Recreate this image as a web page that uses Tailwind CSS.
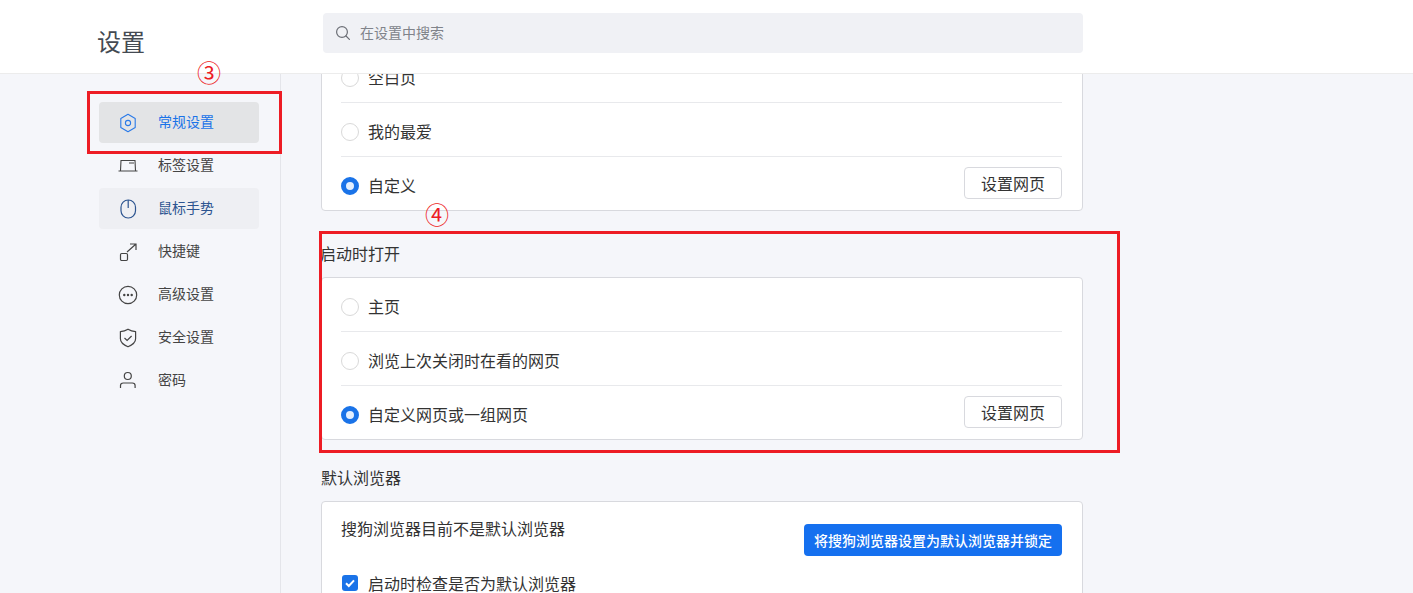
<!DOCTYPE html>
<html lang="zh-CN">
<head>
    <meta charset="UTF-8">
    <title>设置</title>
    <script src="https://cdn.jsdelivr.net/npm/@tailwindcss/browser@4"></script>
</head>
<body>
    <div class="relative flex flex-col h-screen overflow-hidden bg-[#f5f6fa] font-['Noto_Sans_CJK_SC','Microsoft_YaHei',sans-serif] text-[#333]">

        <!-- header -->
        <header class="flex items-center shrink-0 h-[74px] bg-white border-b border-[#ececec]">
            <div class="w-[323px] pl-[97px] pt-[8px] text-2xl leading-8 text-[#444a52]">设置</div>
            <div class="flex items-center w-[760px] h-10 mb-[7px] pl-[12px] gap-[9px] rounded bg-[#f0f1f5] text-sm text-[#80838a]">
                <svg class="w-4 h-4" viewBox="0 0 16 16" fill="none" stroke="#6b6e75" stroke-width="1.2">
                    <circle cx="7" cy="7" r="5.4"/><path d="M11 11l3.4 3.4" stroke-linecap="round"/>
                </svg>
                <span class="-mt-[2px]">在设置中搜索</span>
            </div>
        </header>

        <div class="flex flex-1 min-h-0">
            <!-- sidebar -->
            <nav class="shrink-0 w-[281px] pl-[99px] pr-[21px] pt-[28px] border-r border-[#e4e5ea]">
                <div class="flex flex-col gap-[2px] text-sm text-[#444]">
                    <a class="flex items-center h-[41px] pl-[17px] gap-[18px] rounded bg-[#e3e4e6] text-[#1a73e8]">
                        <svg class="w-6 h-6" viewBox="0 0 24 24" fill="none" stroke="#2a7ae8" stroke-width="1.1">
                            <path d="M12 3.2l7.2 4.3v9l-7.2 4.3-7.2-4.3v-9z" stroke-linejoin="round"/><circle cx="12" cy="12" r="2.6"/>
                        </svg>
                        <span class="-mt-[4px]">常规设置</span>
                    </a>
                    <a class="flex items-center h-[41px] pl-[17px] gap-[18px]">
                        <svg class="w-6 h-6" viewBox="0 0 24 24" fill="none" stroke="#444" stroke-width="1.1">
                            <path d="M4.5 16.5L5 6.5h14l.5 10M2.5 17h19M13 9h5"/>
                        </svg>
                        <span class="-mt-[4px]">标签设置</span>
                    </a>
                    <a class="flex items-center h-[41px] pl-[17px] gap-[18px] rounded bg-[#eeeff3] text-[#2c5490]">
                        <svg class="w-6 h-6" viewBox="0 0 24 24" fill="none" stroke="#2c5490" stroke-width="1.2">
                            <rect x="5" y="3" width="14.5" height="18" rx="7.2"/><path d="M12.2 3v8"/>
                        </svg>
                        <span class="-mt-[4px]">鼠标手势</span>
                    </a>
                    <a class="flex items-center h-[41px] pl-[17px] gap-[18px]">
                        <svg class="w-6 h-6" viewBox="0 0 24 24" fill="none" stroke="#444" stroke-width="1.2">
                            <rect x="4.5" y="13.5" width="7" height="7" rx="1.2"/><path d="M11 12L20 4M14 4h6v6"/>
                        </svg>
                        <span class="-mt-[4px]">快捷键</span>
                    </a>
                    <a class="flex items-center h-[41px] pl-[17px] gap-[18px]">
                        <svg class="w-6 h-6" viewBox="0 0 24 24" fill="none" stroke="#444" stroke-width="1.2">
                            <circle cx="12" cy="12" r="8.7"/><circle cx="8.3" cy="12" r=".6" fill="#444"/><circle cx="12" cy="12" r=".6" fill="#444"/><circle cx="15.7" cy="12" r=".6" fill="#444"/>
                        </svg>
                        <span class="-mt-[4px]">高级设置</span>
                    </a>
                    <a class="flex items-center h-[41px] pl-[17px] gap-[18px]">
                        <svg class="w-6 h-6" viewBox="0 0 24 24" fill="none" stroke="#444" stroke-width="1.2">
                            <path d="M12 3.2c2.4 1.5 5 2.2 7.6 2.4v7.2c0 3.4-3.2 6.2-7.6 8-4.4-1.8-7.6-4.6-7.6-8V5.6C7 5.4 9.6 4.7 12 3.2z" stroke-linejoin="round"/><path d="M8.5 12l2.6 2.5 4.5-4.5"/>
                        </svg>
                        <span class="-mt-[4px]">安全设置</span>
                    </a>
                    <a class="flex items-center h-[41px] pl-[17px] gap-[18px]">
                        <svg class="w-6 h-6" viewBox="0 0 24 24" fill="none" stroke="#444" stroke-width="1.2">
                            <circle cx="11.8" cy="7" r="3.5"/><path d="M4.5 19v-2.5c0-1.5 1.2-2.500 2.800-2.500h9c1.600 0 2.800 1 2.800 2.500V19"/>
                        </svg>
                        <span class="-mt-[4px]">密码</span>
                    </a>
                </div>
            </nav>

            <!-- settings, scrolled down a little -->
            <main class="flex-1 min-w-0 overflow-hidden pl-[40px]">
                <div class="w-[762px] -mt-[26px]">
                    <section class="bg-white border border-[#d8d9de] rounded pl-[19px] pr-[20px]">
                        <div class="flex items-center h-[54px] gap-[9px] border-b border-[#e8e9ec]">
                            <span class="mt-[4px] w-[18px] h-[18px] rounded-full border border-[#d9d9d9]"></span>
                            <span class="mt-[2px]">空白页</span>
                        </div>
                        <div class="flex items-center h-[54px] gap-[9px] border-b border-[#e8e9ec]">
                            <span class="mt-[4px] w-[18px] h-[18px] rounded-full border border-[#d9d9d9]"></span>
                            <span class="mt-[2px]">我的最爱</span>
                        </div>
                        <div class="flex items-center h-[53px] gap-[9px]">
                            <span class="mt-[4px] w-[18px] h-[18px] rounded-full border-[5px] border-[#1a73e8] bg-[#e3efff]"></span>
                            <span class="mt-[2px]">自定义</span>
                            <button class="ml-auto -mt-[2px] w-[98px] h-8 bg-white border border-[#d8d9de] rounded">设置网页</button>
                        </div>
                    </section>

                    <h2 class="mt-[30px] mb-[12px] -ml-px leading-6">启动时打开</h2>
                    <section class="bg-white border border-[#d8d9de] rounded pl-[19px] pr-[20px]">
                        <div class="flex items-center h-[54px] gap-[9px] border-b border-[#e8e9ec]">
                            <span class="mt-[4px] w-[18px] h-[18px] rounded-full border border-[#d9d9d9]"></span>
                            <span class="mt-[2px]">主页</span>
                        </div>
                        <div class="flex items-center h-[54px] gap-[9px] border-b border-[#e8e9ec]">
                            <span class="mt-[4px] w-[18px] h-[18px] rounded-full border border-[#d9d9d9]"></span>
                            <span class="mt-[2px]">浏览上次关闭时在看的网页</span>
                        </div>
                        <div class="flex items-center h-[53px] gap-[9px]">
                            <span class="mt-[4px] w-[18px] h-[18px] rounded-full border-[5px] border-[#1a73e8] bg-[#e3efff]"></span>
                            <span class="mt-[2px]">自定义网页或一组网页</span>
                            <button class="ml-auto -mt-[2px] w-[98px] h-8 bg-white border border-[#d8d9de] rounded">设置网页</button>
                        </div>
                    </section>

                    <h2 class="mt-[25px] mb-[12px] leading-6">默认浏览器</h2>
                    <section class="h-[200px] bg-white border border-[#d8d9de] rounded pl-[19px] pr-[20px] pt-[22px]">
                        <div class="flex items-start justify-between">
                            <span class="leading-[8px]">搜狗浏览器目前不是默认浏览器</span>
                            <button class="w-[258px] h-8 rounded bg-[#1570ef] text-white text-sm font-medium">将搜狗浏览器设置为默认浏览器并锁定</button>
                        </div>
                        <label class="flex items-center gap-[10px] mt-[15px] ml-px leading-6">
                            <span class="flex items-center justify-center w-4 h-4 rounded-[3px] bg-[#1a73e8]">
                                <svg class="w-3 h-3" viewBox="0 0 12 12" fill="none" stroke="#fff" stroke-width="2"><path d="M2 6.2l2.8 2.8L10 3.3"/></svg>
                            </span>
                            启动时检查是否为默认浏览器
                        </label>
                    </section>
                </div>
            </main>
        </div>

        <!-- red annotations -->
        <div class="absolute left-[87px] top-[91px] w-[195px] h-[63px] border-[3px] border-[#ed1c24]"></div>
        <div class="absolute left-[319px] top-[231px] w-[801px] h-[222px] border-[3px] border-[#ed1c24]"></div>
        <span class="absolute left-[197px] top-[58px] text-[24px] leading-[28px] text-[#ed1c24]">③</span>
        <span class="absolute left-[425px] top-[200px] text-[24px] leading-[28px] text-[#ed1c24]">④</span>
    </div>
</body>
</html>
